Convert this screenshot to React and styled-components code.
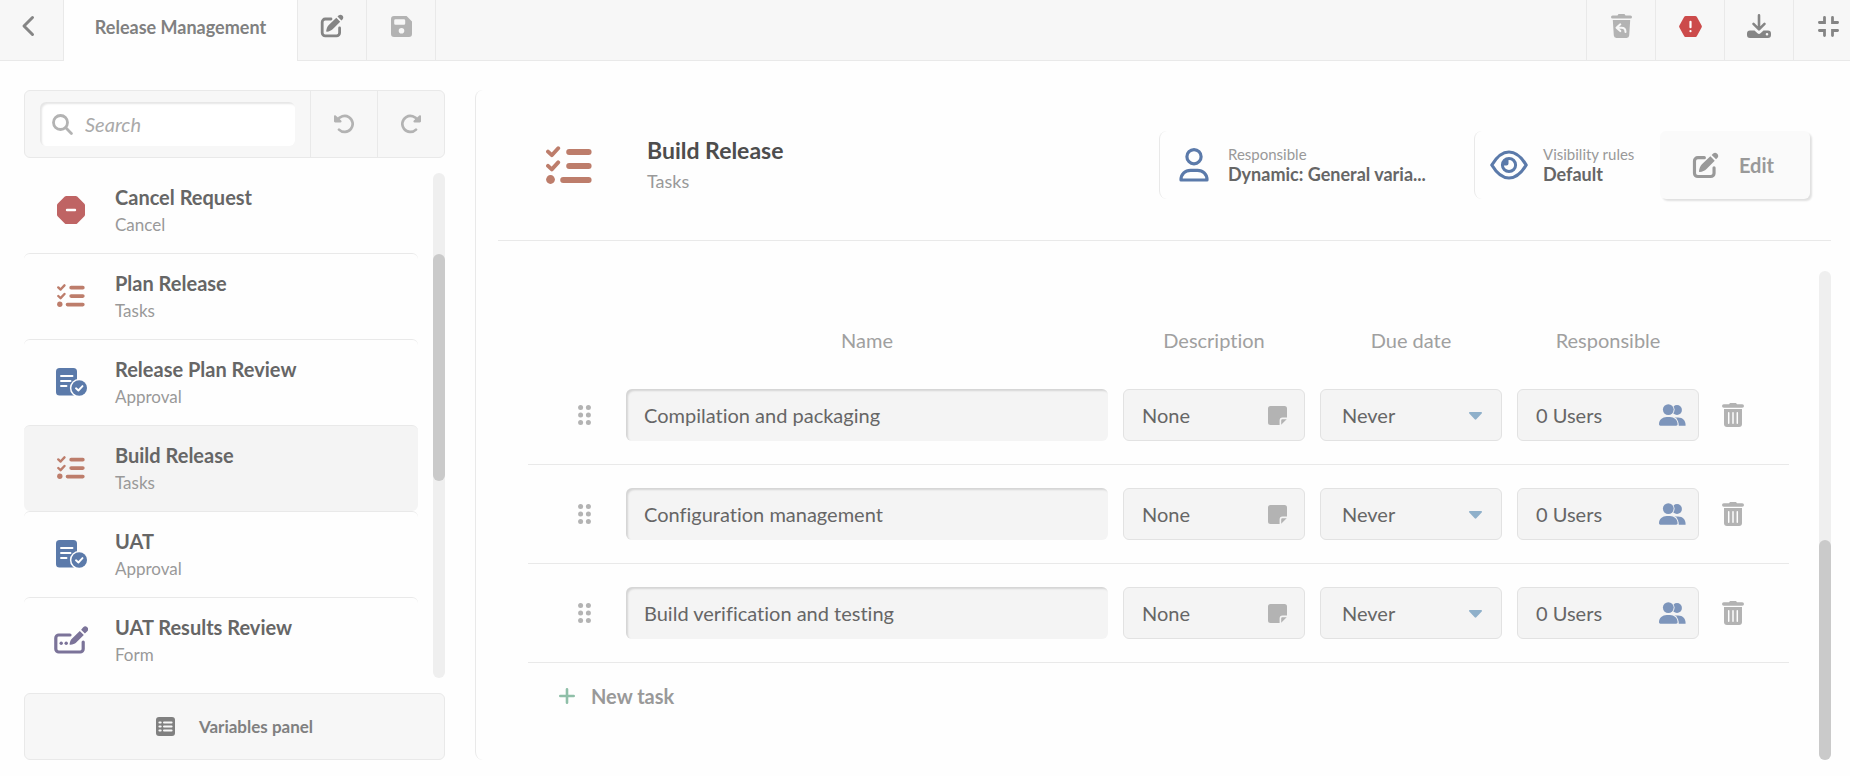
import React, { useState } from 'react';
import styled, { createGlobalStyle, css } from 'styled-components';

const GlobalStyle = createGlobalStyle`
  * {
    box-sizing: border-box;
  }

  body {
    margin: 0;
    background: #fefefe;
    color: #666;
    font-family: Lato, 'Liberation Sans', sans-serif;
    font-size: 20px;
    font-variant-ligatures: none;
  }

  button,
  input,
  select {
    margin: 0;
    font-family: inherit;
    font-variant-ligatures: none;
  }

  button,
  select {
    cursor: pointer;
  }

  svg {
    display: block;
    flex-shrink: 0;
  }
`;

const colors = {
  border: '#e9e9e9',
  bar: '#f7f7f7',
  field: '#f4f4f4',
  blue: '#5b7aaa',
  lightBlue: '#7d95bb',
  brick: '#bd7d6b',
  red: '#bf6464',
  alert: '#cc4b4b',
  purple: '#7b7399',
  green: '#8fbfa8',
  icon: '#858585',
  muted: '#b3b3b3',
};

/* Layout */

const Page = styled.div`
  display: flex;
  flex-direction: column;
  height: 100vh;
  min-height: 560px;
  overflow: hidden;
`;

const Body = styled.div`
  display: flex;
  flex: 1;
  gap: 30px;
  min-height: 0;
  padding: 29px 19px 16px 24px;
`;

const Sidebar = styled.aside`
  display: flex;
  flex-direction: column;
  flex-shrink: 0;
  gap: 15px;
  width: 421px;
`;

const Main = styled.main`
  display: flex;
  flex-direction: column;
  flex: 1;
  min-width: 0;
  padding-left: 22px;
  border-left: 1px solid ${colors.border};
  border-radius: 8px;
`;

/* Top bar */

const TopBar = styled.header`
  display: flex;
  flex-shrink: 0;
  height: 61px;
  overflow: hidden;
`;

const cell = css`
  display: flex;
  align-items: center;
  justify-content: center;
  flex-shrink: 0;
  padding: 0 0 8px;
  border: 0 solid ${colors.border};
  border-bottom-width: 1px;
  background: ${colors.bar};
`;

const BarButton = styled.button`
  ${cell}
  width: 69px;
  border-${({ $side }) => $side || 'right'}-width: 1px;
  color: ${({ $color }) => $color || colors.icon};
`;

const BackButton = styled(BarButton)`
  width: 64px;
  padding-right: 8px;
`;

const Tab = styled.h1`
  ${cell}
  width: 234px;
  margin: 0;
  border-bottom-width: 0;
  border-right-width: 1px;
  background: transparent;
  color: #808080;
  font-size: 18px;
  font-weight: 700;
`;

const BarSpace = styled.div`
  ${cell}
  flex: 1;
`;

const BarActions = styled.div`
  display: flex;
  flex-shrink: 0;
  margin-right: -12px;
`;

/* Sidebar */

const Tools = styled.div`
  display: flex;
  flex-shrink: 0;
  height: 68px;
  border: 1px solid ${colors.border};
  border-radius: 6px;
  background: ${colors.bar};
`;

const SearchBox = styled.label`
  display: flex;
  align-items: center;
  flex: 1;
  gap: 12px;
  min-width: 0;
  margin: 11px 15px;
  padding: 0 12px;
  border-radius: 6px;
  background: #fff;
  box-shadow: inset 2px 2px 2px rgba(0, 0, 0, 0.1);
  color: ${colors.muted};
`;

const SearchInput = styled.input`
  width: 100%;
  min-width: 0;
  padding: 0;
  border: 0;
  outline: 0;
  background: transparent;
  color: #666;
  font-size: 20px;

  &::placeholder {
    color: #aaa;
    font-style: italic;
  }
`;

const ToolButton = styled.button`
  display: flex;
  align-items: center;
  justify-content: center;
  width: 67px;
  padding: 0;
  border: 0;
  border-left: 1px solid ${colors.border};
  background: transparent;
  color: ${colors.muted};
`;

const StepArea = styled.nav`
  display: flex;
  flex: 1;
  gap: 15px;
  min-height: 0;
`;

const StepViewport = styled.div`
  flex: 1;
  overflow: hidden;
`;

const StepList = styled.ul`
  margin: -6px 0 0;
  padding: 0;
  list-style: none;
`;

const StepLink = styled.a`
  display: flex;
  align-items: center;
  gap: 26px;
  height: 86px;
  padding: 0 29px;
  border-top: 1px solid ${colors.border};
  border-radius: 6px;
  background: ${({ $active }) => ($active ? colors.field : 'transparent')};
  text-decoration: none;
`;

const StepIcon = styled.span`
  display: flex;
  justify-content: center;
  width: 36px;
  padding-bottom: 2px;
`;

const StepTitle = styled.div`
  color: #666;
  font-size: 20px;
  font-weight: 700;
  line-height: 27px;
`;

const StepKind = styled.div`
  color: #999;
  font-size: 17px;
  line-height: 27px;
`;

const PanelButton = styled.button`
  display: flex;
  align-items: center;
  justify-content: center;
  flex-shrink: 0;
  gap: 24px;
  height: 67px;
  border: 1px solid ${colors.border};
  border-radius: 6px;
  background: ${colors.bar};
  color: #808080;
  font-size: 17px;
  font-weight: 700;
`;

/* Scroll track, shared by both columns */

const Track = styled.div`
  display: flex;
  flex-direction: column;
  flex-shrink: 0;
  width: 12px;
  border-radius: 6px;
  background: #efefef;

  &::before {
    content: '';
    flex: ${({ $before }) => $before};
  }

  &::after {
    content: '';
    flex: ${({ $after }) => $after};
  }
`;

const Thumb = styled.div`
  flex: ${({ $size }) => $size};
  border-radius: 6px;
  background: #cacaca;
`;

const Scroll = ({ before, size }) => (
  <Track $before={before} $after={100 - before - size} aria-hidden="true">
    <Thumb $size={size} />
  </Track>
);

/* Step header */

const StepHeader = styled.header`
  display: flex;
  align-items: center;
  flex-shrink: 0;
  height: 151px;
  padding: 0 21px 0 48px;
  border-bottom: 1px solid ${colors.border};
`;

const Heading = styled.div`
  flex: 1;
  min-width: 0;
  margin-left: 55px;
  padding-top: 2px;
`;

const HeadingTitle = styled.h2`
  margin: 0;
  color: #4d4d4d;
  font-size: 23px;
  font-weight: 700;
  line-height: 31px;
`;

const HeadingKind = styled.div`
  color: #999;
  font-size: 18px;
  line-height: 31px;
`;

const Info = styled.div`
  display: flex;
  align-items: center;
  gap: 15px;
  width: ${({ $width }) => $width}px;
  height: 68px;
  padding-left: 15px;
  border-left: 1px solid ${colors.border};
  border-radius: 8px;
  color: ${colors.blue};
`;

const InfoIcon = styled.span`
  display: flex;
  justify-content: center;
  width: 38px;
`;

const InfoText = styled.div`
  padding-bottom: 2px;
  line-height: 20px;
  white-space: nowrap;
`;

const InfoLabel = styled.div`
  color: #999;
  font-size: 15px;
`;

const InfoValue = styled.div`
  color: #666;
  font-size: 18px;
  font-weight: 700;
`;

const EditButton = styled.button`
  display: flex;
  align-items: center;
  justify-content: center;
  gap: 20px;
  width: 150px;
  height: 68px;
  padding: 0 4px 0 0;
  border: 0;
  border-radius: 6px;
  background: #fafafa;
  box-shadow: 2px 2px 2px rgba(0, 0, 0, 0.12);
  color: #999;
  font-size: 20px;
  font-weight: 700;
`;

/* Tasks */

const TaskArea = styled.section`
  display: flex;
  flex: 1;
  gap: 30px;
  min-height: 0;
  padding-left: 30px;
`;

const TaskContent = styled.div`
  flex: 1;
  min-width: 0;
  padding-top: 75px;
`;

const TaskScroll = styled.div`
  display: flex;
  padding-top: 30px;
`;

const Table = styled.table`
  width: 100%;
  border-spacing: 0;
  table-layout: fixed;
`;

const Th = styled.th`
  width: ${({ $width }) => ($width ? `${$width}px` : 'auto')};
  height: 50px;
  padding: 0 15px 2px 0;
  color: #a0a0a0;
  font-size: 20px;
  font-weight: 400;
  vertical-align: middle;
`;

const Td = styled.td`
  height: 99px;
  padding: 0 15px 0 0;
  border-bottom: 1px solid ${colors.border};
`;

const field = css`
  width: 100%;
  height: 52px;
  border: 1px solid #e2e2e2;
  border-radius: 6px;
  background: ${colors.field};
  color: #666;
  font-size: 20px;
`;

const NameInput = styled.input`
  ${field}
  display: block;
  padding: 0 18px;
  border: 0;
  outline: 0;
  box-shadow: inset 2px 2px 2px rgba(0, 0, 0, 0.13);
`;

const FieldButton = styled.button`
  ${field}
  display: flex;
  align-items: center;
  justify-content: space-between;
  padding: 0 ${({ $right }) => $right}px 0 18px;
`;

const SelectBox = styled.div`
  position: relative;

  svg {
    position: absolute;
    top: 23px;
    right: 20px;
    pointer-events: none;
  }
`;

const Select = styled.select`
  ${field}
  display: block;
  padding: 0 40px 0 21px;
  appearance: none;
  outline: 0;
`;

const IconButton = styled.button`
  display: block;
  padding: 0;
  border: 0;
  background: transparent;
  color: ${colors.muted};
`;

const DragHandle = styled(IconButton)`
  margin-left: 50px;
  cursor: grab;
`;

const DeleteButton = styled(IconButton)`
  margin-left: 8px;
`;

const NewTaskButton = styled.button`
  display: flex;
  align-items: center;
  gap: 16px;
  height: 40px;
  margin: 13px 0 0 31px;
  padding: 0;
  border: 0;
  background: transparent;
  color: #999;
  font-size: 20px;
  font-weight: 700;
`;

/* Icons */

const BackIcon = () => (
  <svg width="14" height="22" viewBox="0 0 14 22" fill="none" stroke="currentColor" strokeWidth="3" strokeLinecap="round" strokeLinejoin="round">
    <path d="M11.500 2.500 3 11l8.500 8.500" />
  </svg>
);

const EditIcon = ({ size = 24 }) => (
  <svg width={size} height={size} viewBox="0 0 24 24" fill="currentColor">
    <path d="M11 5H5.200A3 3 0 0 0 2.200 8v10.800a3 3 0 0 0 3 3h11.400a3 3 0 0 0 3-3V14" fill="none" stroke="currentColor" strokeWidth="2.800" strokeLinecap="round" />
    <path d="M7 17.800c-.5.200-.9-.2-.8-.7.300-2.300 1-4.600 2.600-6.200L16.300 3.800l3.900 3.900-7.300 7.300c-1.600 1.600-3.700 2.400-5.900 2.800z" />
    <path d="M17.500 2.600l1.300-1.300a2.800 2.800 0 0 1 3.900 3.900l-1.300 1.300z" />
  </svg>
);

const SaveIcon = () => (
  <svg width="21" height="21" viewBox="0 0 21 21" fill="currentColor">
    <path fillRule="evenodd" d="M3 0h12.600L21 5.400V18a3 3 0 0 1-3 3H3a3 3 0 0 1-3-3V3a3 3 0 0 1 3-3zM4.500 3.200A1.300 1.300 0 0 0 3.200 4.500v3a1.300 1.300 0 0 0 1.300 1.300h8.400a1.300 1.300 0 0 0 1.300-1.300v-3a1.300 1.300 0 0 0-1.300-1.300zM10.500 12a2.800 2.800 0 1 0 0 5.600 2.800 2.800 0 0 0 0-5.600z" />
  </svg>
);

const RestoreIcon = () => (
  <svg width="21" height="24" viewBox="0 0 21 24" fill="currentColor">
    <path d="M7.500 0h6l1 1.500h5a1.500 1.500 0 0 1 0 3h-18a1.500 1.500 0 0 1 0-3h5z" />
    <path d="M1.800 6h17.400l-1 15.600A2.600 2.600 0 0 1 15.600 24H5.400a2.600 2.600 0 0 1-2.600-2.400z" />
    <path d="M9.300 10.300 5.500 13.700l3.800 3.400M6 13.700h4.500c2.700 0 4 1.500 4 4.300" fill="none" stroke={colors.bar} strokeWidth="2" strokeLinecap="round" strokeLinejoin="round" />
  </svg>
);

const AlertIcon = () => (
  <svg width="23" height="21" viewBox="0 0 23 21" fill="currentColor">
    <path d="M6.800 0h9.400c.7 0 1.400.4 1.700 1l4.700 8.500c.4.600.4 1.400 0 2L17.900 20c-.3.600-1 1-1.700 1H6.800c-.7 0-1.400-.4-1.700-1L.4 11.500c-.4-.6-.4-1.400 0-2L5.100 1c.3-.6 1-1 1.700-1z" />
    <path d="M11.500 5.800v5.400M11.500 15v.2" stroke="#fff" strokeWidth="2.200" strokeLinecap="round" />
  </svg>
);

const DownloadIcon = () => (
  <svg width="24" height="24" viewBox="0 0 24 24" fill="currentColor">
    <path d="M12 1.400v13M6.500 9.800l5.500 5.500 5.500-5.500" fill="none" stroke="currentColor" strokeWidth="2.600" strokeLinecap="round" strokeLinejoin="round" />
    <path fillRule="evenodd" d="M3 16.500h4.500l3 2.700a2.200 2.200 0 0 0 3 0l3-2.700H21a3 3 0 0 1 3 3v1.500a3 3 0 0 1-3 3H3a3 3 0 0 1-3-3v-1.500a3 3 0 0 1 3-3zm17 2.500a1.300 1.300 0 1 0 0 2.600 1.300 1.300 0 0 0 0-2.600z" />
  </svg>
);

const CollapseIcon = () => (
  <svg width="21" height="21" viewBox="0 0 21 21" fill="none" stroke="currentColor" strokeWidth="2.800" strokeLinecap="round">
    <path d="M6.500 1.400v5.100H1.400M14.500 1.400v5.100h5.100M6.500 19.600v-5.100H1.400M14.500 19.600v-5.100h5.100" />
  </svg>
);

const SearchIcon = () => (
  <svg width="21" height="21" viewBox="0 0 21 21" fill="none" stroke="currentColor" strokeWidth="2.800" strokeLinecap="round">
    <circle cx="8.500" cy="8.500" r="7" />
    <path d="m13.800 13.800 5.600 5.600" />
  </svg>
);

const UndoIcon = ({ redo }) => (
  <svg width="20" height="20" viewBox="0 0 20 20">
    <g transform={redo ? 'matrix(-1 0 0 1 20 0)' : undefined}>
      <path d="M3.400 6.600A8 8 0 1 1 5 15.600" fill="none" stroke="currentColor" strokeWidth="2.700" strokeLinecap="round" />
      <path d="M0 2.200C0 1.200 1.100.8 1.700 1.500l5.500 5c.8.800.3 1.900-.7 1.900H1.200C.5 8.400 0 7.900 0 7.200z" fill="currentColor" />
    </g>
  </svg>
);

const CancelIcon = () => (
  <svg width="28" height="28" viewBox="0 0 28 28" fill={colors.red}>
    <path d="M9.300 0h9.400c.6 0 1.100.2 1.500.6l7.200 7.200c.4.400.6.900.6 1.500v9.400c0 .6-.2 1.100-.6 1.500l-7.200 7.200c-.4.400-.9.600-1.500.6H9.300c-.6 0-1.100-.2-1.500-.6L.6 20.200c-.4-.4-.6-.9-.6-1.500V9.300c0-.6.2-1.100.6-1.500L7.800.6C8.200.2 8.700 0 9.300 0z" />
    <path d="M10 14h8" stroke="#fff" strokeWidth="2.400" strokeLinecap="round" />
  </svg>
);

const TasksIcon = ({ width = 28 }) => (
  <svg width={width} height={Math.round((width * 38) / 46)} viewBox="0 0 46 38" fill="none" stroke={colors.brick} strokeLinecap="round" strokeLinejoin="round">
    <path d="M2 5.600 5.800 9.200 12.200 2.200M2 19.800 5.800 23.400 12.200 16.400" strokeWidth="3.900" />
    <path d="M23.200 6H42.600M23.200 20H42.600M17.200 34H42.600" strokeWidth="6" />
    <circle cx="4.500" cy="33.500" r="4.400" fill={colors.brick} stroke="none" />
  </svg>
);

const ApprovalIcon = () => (
  <svg width="31" height="28" viewBox="0 0 31 28" fill={colors.blue}>
    <rect width="21" height="27.600" rx="3.600" />
    <path d="M5 8h11.500M5 13h9.500M5 18h5.500" stroke="#fff" strokeWidth="1.900" strokeLinecap="round" />
    <circle cx="23.200" cy="20" r="9.300" fill="#fefefe" />
    <circle cx="23.200" cy="20" r="7.800" />
    <path d="m20 20.300 2.400 2.200 4.100-4.400" fill="none" stroke="#fff" strokeWidth="1.900" strokeLinecap="round" strokeLinejoin="round" />
  </svg>
);

const FormIcon = () => (
  <svg width="34" height="28" viewBox="0 0 34 28" fill={colors.purple}>
    <path d="M16 9H4.800A3 3 0 0 0 1.800 12v11a3 3 0 0 0 3 3h21.400a3 3 0 0 0 3-3v-7" fill="none" stroke={colors.purple} strokeWidth="3.200" strokeLinecap="round" />
    <path d="M16.500 18.800c-.6.100-1-.3-.9-.9.400-2.300 1.100-3.900 2.500-5.300L25.800 5l4 4-7.600 7.500c-1.500 1.400-3.400 2.100-5.700 2.300z" />
    <path d="M27.100 3.800 29.200 1.200a2.900 2.900 0 0 1 4.100 4.100L30.900 7.600z" />
    <circle cx="7.200" cy="17.300" r="1.700" />
    <circle cx="12.200" cy="17.300" r="1.700" />
  </svg>
);

const PanelIcon = () => (
  <svg width="19" height="19" viewBox="0 0 19 19" fill="currentColor">
    <rect width="19" height="19" rx="3" />
    <path d="M3.400 5.400h1.300M3.400 9.500h1.300M3.400 13.600h1.300M8 5.400h7.600M8 9.500h7.600M8 13.600h7.600" stroke={colors.bar} strokeWidth="2" strokeLinecap="round" />
  </svg>
);

const UserIcon = () => (
  <svg width="30" height="34" viewBox="0 0 30 34" fill="none" stroke="currentColor" strokeWidth="3.200" strokeLinejoin="round">
    <circle cx="15" cy="8.700" r="7.100" />
    <path d="M2 32c0-6 4.200-9.600 9.500-9.600h7c5.300 0 9.500 3.600 9.500 9.600z" />
  </svg>
);

const EyeIcon = () => (
  <svg width="38" height="30" viewBox="0 0 38 30" fill="none" stroke="currentColor" strokeLinejoin="round">
    <path d="M1.800 15C6 8 11 2 19 2s13 6 17.200 13C32 22 27 28 19 28S6 22 1.800 15z" strokeWidth="3.200" />
    <circle cx="19" cy="15" r="6.600" strokeWidth="3" />
    <path d="M18.500 9v4.500a2 2 0 0 1-2 2H13c0-3.500 2-6.500 5.500-6.500z" fill="currentColor" stroke="none" />
  </svg>
);

const GripIcon = () => (
  <svg width="13" height="20" viewBox="0 0 13 20" fill="currentColor">
    {[2.500, 10, 17.500].map((y) => (
      <React.Fragment key={y}>
        <circle cx="2.600" cy={y} r="2.500" />
        <circle cx="10.400" cy={y} r="2.500" />
      </React.Fragment>
    ))}
  </svg>
);

const NoteIcon = () => (
  <svg width="19" height="19" viewBox="0 0 19 19" fill={colors.muted}>
    <path d="M2.500 0h14A2.500 2.500 0 0 1 19 2.500V11.600h-4.500a2.900 2.900 0 0 0-2.900 2.900V19H2.500A2.500 2.500 0 0 1 0 16.500v-14A2.500 2.500 0 0 1 2.500 0z" />
    <path d="M13.200 18.700v-4.300c0-.7.500-1.200 1.200-1.200h4.300z" />
  </svg>
);

const ArrowIcon = () => (
  <svg width="13" height="8" viewBox="0 0 13 8" fill="#8fb0ca">
    <path d="M1 0h11c.9 0 1.300 1 .7 1.600L7.300 7.300a1.100 1.100 0 0 1-1.600 0L.3 1.600C-.3 1 .1 0 1 0z" />
  </svg>
);

const UsersIcon = () => (
  <svg width="27" height="22" viewBox="0 0 27 22" fill={colors.lightBlue}>
    <circle cx="18" cy="6" r="4.900" />
    <path d="M15 13.500h4c5 0 7.600 3 7.600 8.200H15z" />
    <circle cx="9.300" cy="5.600" r="6.300" fill={colors.field} />
    <path d="M-1.500 22C-1.500 15 3 11.800 8 11.800h2.600c5 0 9.200 3.200 9.200 10.200z" fill={colors.field} />
    <circle cx="9.300" cy="5.600" r="5.400" />
    <path d="M0 20.300C0 16 3.500 13 7.700 13h3.200c4.200 0 7.700 3 7.700 7.300 0 .9-.6 1.400-1.400 1.400H1.400C.6 21.700 0 21.200 0 20.300z" />
  </svg>
);

const TrashIcon = () => (
  <svg width="22" height="24" viewBox="0 0 22 24" fill="currentColor">
    <path d="M8 0h6l1 1.200h5.200a1.800 1.800 0 0 1 0 3.600H1.800a1.800 1.800 0 0 1 0-3.600H7z" />
    <path d="M2 6h18v15a3 3 0 0 1-3 3H5a3 3 0 0 1-3-3z" />
    <path d="M6.700 9.700v10.600M11 9.700v10.600M15.300 9.700v10.600" stroke="#fefefe" strokeWidth="1.500" strokeLinecap="round" />
  </svg>
);

const PlusIcon = () => (
  <svg width="16" height="16" viewBox="0 0 16 16" stroke={colors.green} strokeWidth="2.600" strokeLinecap="round">
    <path d="M8 1.300v13.400M1.300 8h13.400" />
  </svg>
);

const stepIcons = {
  Cancel: <CancelIcon />,
  Tasks: <TasksIcon />,
  Approval: <ApprovalIcon />,
  Form: <FormIcon />,
};

const steps = [
  { title: 'Cancel Request', kind: 'Cancel' },
  { title: 'Plan Release', kind: 'Tasks' },
  { title: 'Release Plan Review', kind: 'Approval' },
  { title: 'Build Release', kind: 'Tasks' },
  { title: 'UAT', kind: 'Approval' },
  { title: 'UAT Results Review', kind: 'Form' },
];

const initialTasks = [
  'Compilation and packaging',
  'Configuration management',
  'Build verification and testing',
];

const TaskRow = ({ name, onChange }) => (
  <tr>
    <Td>
      <DragHandle aria-label={`Move ${name}`}>
        <GripIcon />
      </DragHandle>
    </Td>
    <Td>
      <NameInput aria-label="Name" value={name} onChange={(e) => onChange(e.target.value)} />
    </Td>
    <Td>
      <FieldButton $right={17}>
        None
        <NoteIcon />
      </FieldButton>
    </Td>
    <Td>
      <SelectBox>
        <Select aria-label="Due date" defaultValue="Never">
          <option>Never</option>
        </Select>
        <ArrowIcon />
      </SelectBox>
    </Td>
    <Td>
      <FieldButton $right={12}>
        0 Users
        <UsersIcon />
      </FieldButton>
    </Td>
    <Td>
      <DeleteButton aria-label={`Delete ${name}`}>
        <TrashIcon />
      </DeleteButton>
    </Td>
  </tr>
);

export default function App() {
  const [active, setActive] = useState(3);
  const [tasks, setTasks] = useState(initialTasks);

  const renameTask = (index, value) => {
    setTasks(tasks.map((task, i) => (i === index ? value : task)));
  };

  return (
    <Page>
      <GlobalStyle />
      <TopBar>
        <BackButton aria-label="Back">
          <BackIcon />
        </BackButton>
        <Tab>Release Management</Tab>
        <BarButton aria-label="Rename">
          <EditIcon />
        </BarButton>
        <BarButton aria-label="Save" $color={colors.muted}>
          <SaveIcon />
        </BarButton>
        <BarSpace />
        <BarActions>
          <BarButton aria-label="Restore" $side="left" $color={colors.muted}>
            <RestoreIcon />
          </BarButton>
          <BarButton aria-label="Errors" $side="left" $color={colors.alert}>
            <AlertIcon />
          </BarButton>
          <BarButton aria-label="Download" $side="left">
            <DownloadIcon />
          </BarButton>
          <BarButton aria-label="Exit full screen" $side="left">
            <CollapseIcon />
          </BarButton>
        </BarActions>
      </TopBar>

      <Body>
        <Sidebar>
          <Tools>
            <SearchBox>
              <SearchIcon />
              <SearchInput type="search" placeholder="Search" aria-label="Search" />
            </SearchBox>
            <ToolButton aria-label="Undo">
              <UndoIcon />
            </ToolButton>
            <ToolButton aria-label="Redo">
              <UndoIcon redo />
            </ToolButton>
          </Tools>

          <StepArea>
            <StepViewport>
              <StepList>
                {steps.map(({ title, kind }, index) => (
                  <li key={title}>
                    <StepLink href="#step" $active={index === active} onClick={() => setActive(index)}>
                      <StepIcon>{stepIcons[kind]}</StepIcon>
                      <div>
                        <StepTitle>{title}</StepTitle>
                        <StepKind>{kind}</StepKind>
                      </div>
                    </StepLink>
                  </li>
                ))}
              </StepList>
            </StepViewport>
            <Scroll before={16} size={45} />
          </StepArea>

          <PanelButton>
            <PanelIcon />
            Variables panel
          </PanelButton>
        </Sidebar>

        <Main>
          <StepHeader>
            <TasksIcon width={46} />
            <Heading>
              <HeadingTitle>{steps[active].title}</HeadingTitle>
              <HeadingKind>{steps[active].kind}</HeadingKind>
            </Heading>
            <Info $width={315}>
              <InfoIcon>
                <UserIcon />
              </InfoIcon>
              <InfoText>
                <InfoLabel>Responsible</InfoLabel>
                <InfoValue>Dynamic: General varia...</InfoValue>
              </InfoText>
            </Info>
            <Info $width={186}>
              <InfoIcon>
                <EyeIcon />
              </InfoIcon>
              <InfoText>
                <InfoLabel>Visibility rules</InfoLabel>
                <InfoValue>Default</InfoValue>
              </InfoText>
            </Info>
            <EditButton>
              <EditIcon size={27} />
              Edit
            </EditButton>
          </StepHeader>

          <TaskArea>
            <TaskContent>
              <Table>
                <thead>
                  <tr>
                    <Th $width={98} />
                    <Th>Name</Th>
                    <Th $width={197}>Description</Th>
                    <Th $width={197}>Due date</Th>
                    <Th $width={197}>Responsible</Th>
                    <Th $width={75} />
                  </tr>
                </thead>
                <tbody>
                  {tasks.map((name, index) => (
                    <TaskRow key={index} name={name} onChange={(value) => renameTask(index, value)} />
                  ))}
                </tbody>
              </Table>
              <NewTaskButton onClick={() => setTasks([...tasks, ''])}>
                <PlusIcon />
                New task
              </NewTaskButton>
            </TaskContent>
            <TaskScroll>
              <Scroll before={55} size={45} />
            </TaskScroll>
          </TaskArea>
        </Main>
      </Body>
    </Page>
  );
}
